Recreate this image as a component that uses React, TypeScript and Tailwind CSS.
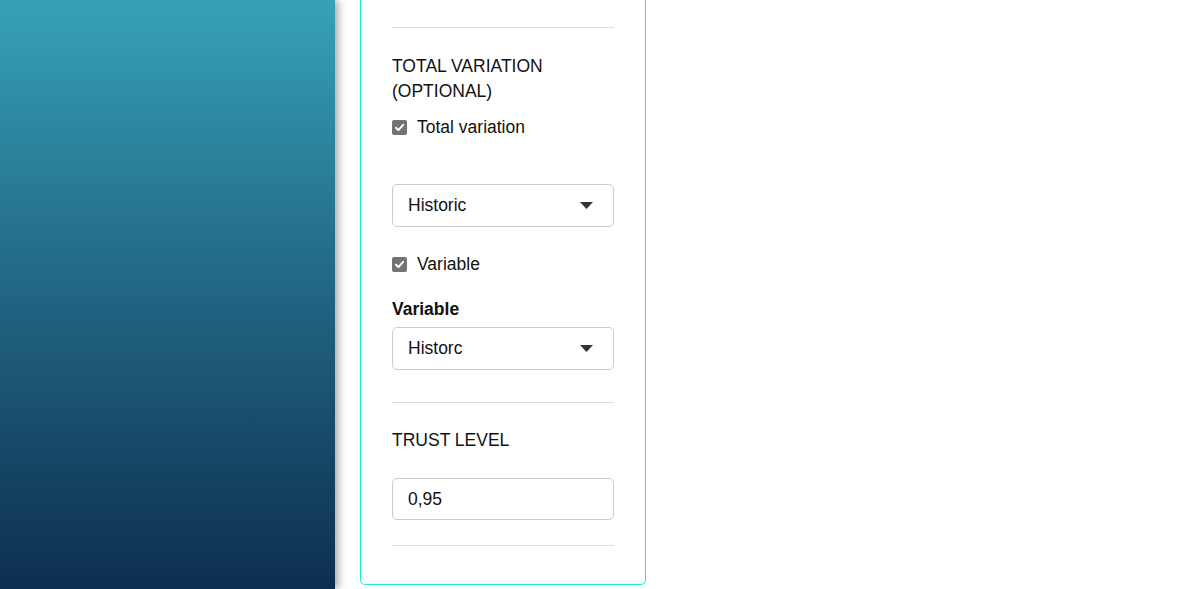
import React from "react";

function Check() {
  return (
    <span className="flex h-[15px] w-[15px] shrink-0 items-center justify-center rounded-[2px] bg-[#737373]">
      <svg width="11" height="11" viewBox="0 0 10 10" fill="none">
        <path d="M1.8 5.2 L4 7.4 L8.3 2.6" stroke="white" strokeWidth="1.8" strokeLinecap="round" strokeLinejoin="round" />
      </svg>
    </span>
  );
}

function Select({ value }: { value: string }) {
  return (
    <div className="flex h-[43px] items-center justify-between rounded-[5px] border border-[#cccccc] bg-white pl-[15px] pr-[20px]">
      <span>{value}</span>
      <svg width="13" height="7" viewBox="0 0 13 7">
        <path d="M0 0 L13 0 L6.5 7 Z" fill="#333" />
      </svg>
    </div>
  );
}

export default function App() {
  return (
    <div
      className="flex h-[589px] w-[1191px] overflow-hidden bg-white text-[17.5px] leading-[25px] text-[#111]"
      style={{ fontFamily: '"Liberation Sans", Arial, sans-serif' }}
    >
      <div className="relative z-10 h-full w-[335px] shrink-0 bg-linear-to-b from-[#37a1b9] to-[#0e2f4f] shadow-[4px_0_7px_rgba(0,0,0,0.3)]" />
      <div className="ml-[25px] mb-[4px] w-[286px] self-start rounded-b-[5px] border-x border-b border-[#14f0d4] px-[31px] pt-[27px] pb-[38px]">
        <div className="h-px bg-[#dddddd]" />
        <div className="mt-[26px]">TOTAL VARIATION<br />(OPTIONAL)</div>
        <label className="mt-[11px] flex items-center gap-[10px]">
          <Check />
          <span>Total variation</span>
        </label>
        <div className="mt-[44px]">
          <Select value="Historic" />
        </div>
        <label className="mt-[25px] flex items-center gap-[10px]">
          <Check />
          <span>Variable</span>
        </label>
        <div className="mt-[20px] font-bold">Variable</div>
        <div className="mt-[5px]">
          <Select value="Historc" />
        </div>
        <div className="mt-[32px] h-px bg-[#dddddd]" />
        <div className="mt-[25px]">TRUST LEVEL</div>
        <div className="mt-[25px] flex h-[42px] items-center rounded-[5px] border border-[#cccccc] pl-[15px]">0,95</div>
        <div className="mt-[25px] h-px bg-[#dddddd]" />
      </div>
    </div>
  );
}
